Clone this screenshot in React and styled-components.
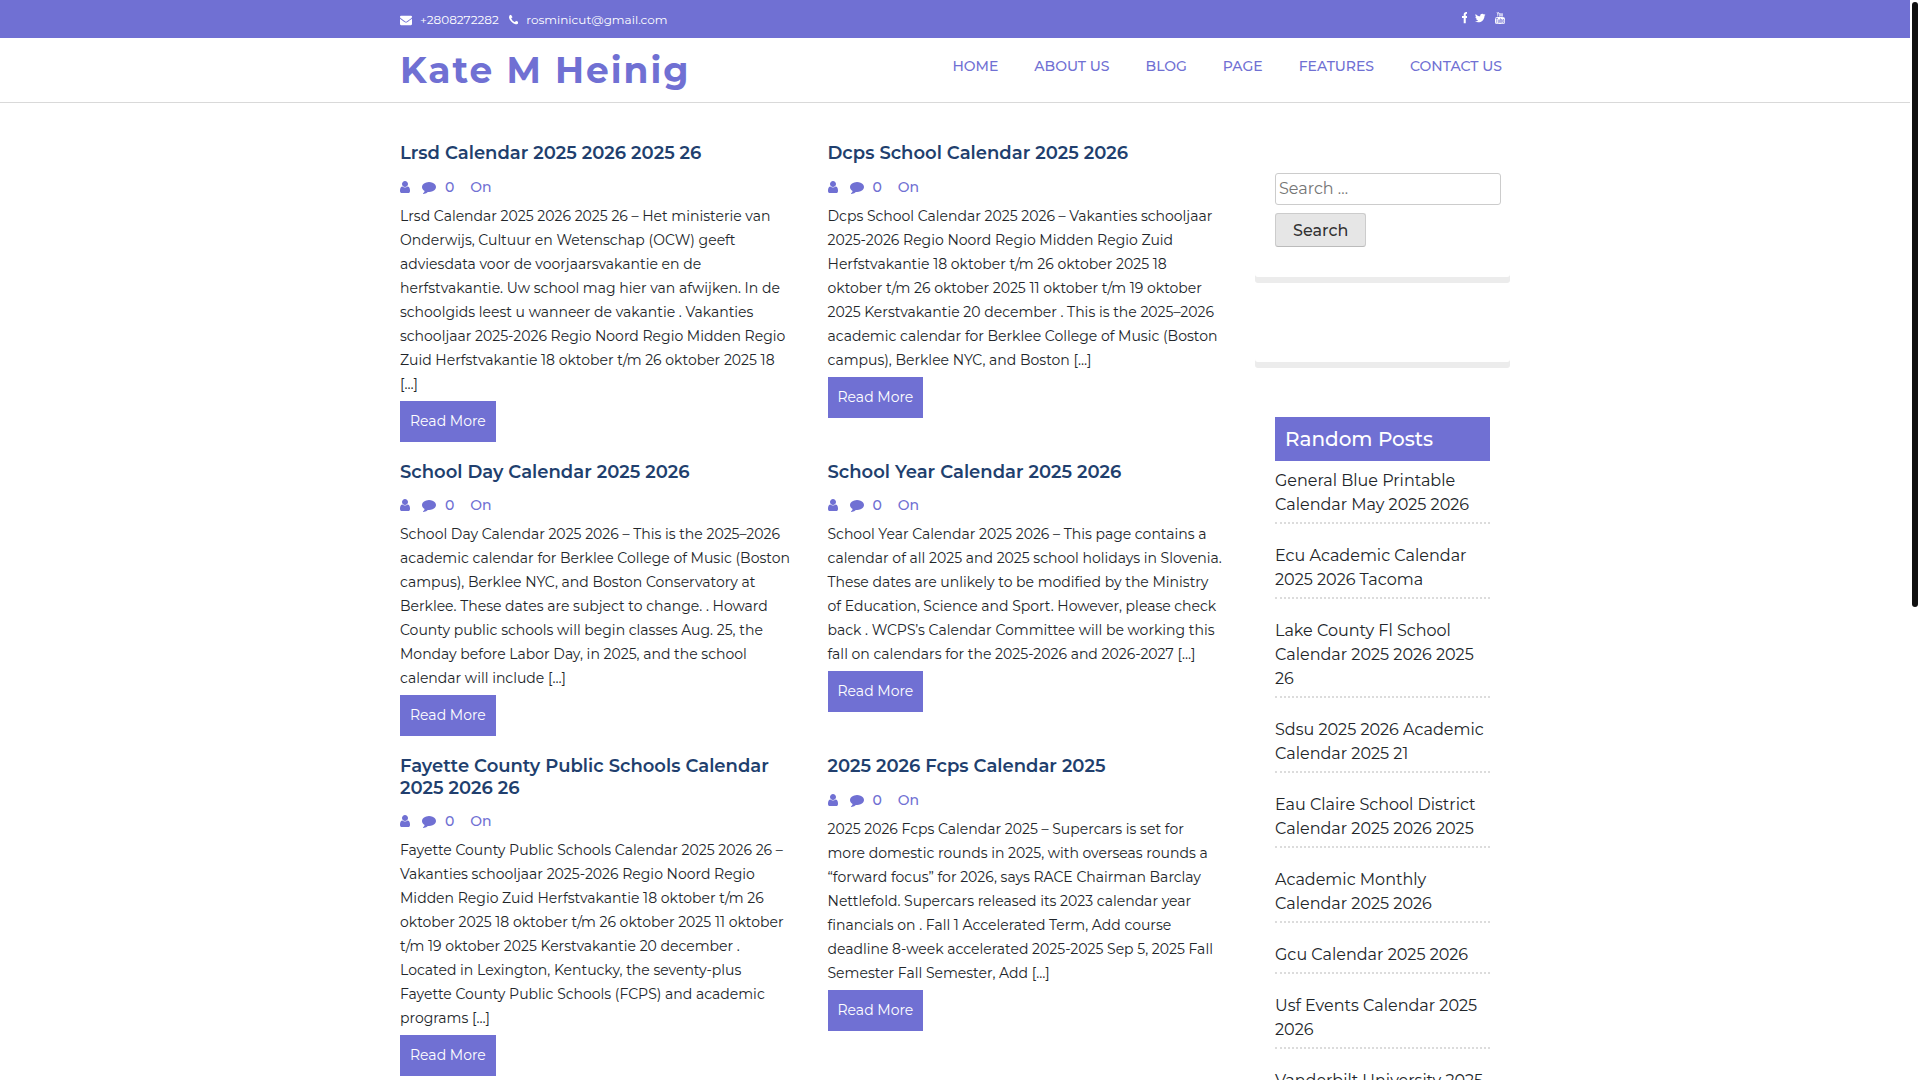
import React from 'react';
import styled, { createGlobalStyle } from 'styled-components';
import { TfiYoutube } from 'react-icons/tfi';

const accent = '#7070d3';
const font = "'Montserrat', 'Inter', sans-serif";

const GlobalStyle = createGlobalStyle`
  * {
    margin: 0;
    padding: 0;
    box-sizing: border-box;
  }

  body {
    background-color: #fff;
    color: #212529;
    font-family: ${font};
    font-size: 16px;
    line-height: 24px;
  }

  a {
    color: inherit;
    text-decoration: none;
  }
`;

const Page = styled.div`
  height: 100vh;
  padding-right: 10px;
  overflow-y: auto;
  scrollbar-width: none;
`;

const ScrollThumb = styled.div`
  position: fixed;
  top: 2px;
  right: 2px;
  width: 6px;
  height: 56vh;
  border-radius: 3px;
  background-color: #101010;
`;

const Container = styled.div`
  width: 100%;
  max-width: 1140px;
  margin: 0 auto;
  padding: 0 15px;
`;

const TopBar = styled.div`
  background-color: ${accent};
  color: #fff;
`;

const TopBarInner = styled(Container)`
  display: flex;
  align-items: center;
  justify-content: space-between;
  height: 38px;
`;

const ContactList = styled.div`
  display: flex;
  align-items: center;
  gap: 10px;
  padding-top: 2px;
  font-size: 12px;
`;

const ContactLink = styled.a`
  display: flex;
  align-items: center;
  gap: 8px;
`;

const SocialList = styled.div`
  display: flex;
  align-items: center;
  gap: 8px;
  padding: 0 4px 2px 0;

  a {
    display: flex;
  }
`;

const Header = styled.header`
  border-bottom: 1px solid #d9d9d9;
`;

const HeaderInner = styled(Container)`
  display: flex;
  align-items: flex-start;
  justify-content: space-between;
  height: 64px;
`;

const SiteTitle = styled.h1`
  color: ${accent};
  font-size: 36px;
  font-weight: 700;
  letter-spacing: 2px;
  line-height: 64px;
  white-space: nowrap;
`;

const Nav = styled.nav`
  display: flex;
  gap: 36px;
  padding: 16px 8px 0 0;
  color: ${accent};
  font-size: 14px;
  font-weight: 500;
  text-transform: uppercase;
  white-space: nowrap;
`;

const Content = styled(Container)`
  display: grid;
  grid-template-columns: minmax(0, 1fr) 255px;
  column-gap: 30px;
  padding-top: 40px;
`;

const PostGrid = styled.main`
  display: grid;
  grid-template-columns: repeat(2, minmax(0, 1fr));
  align-content: start;
  gap: 20px 30px;
`;

const PostTitle = styled.h2`
  margin-bottom: 10px;
  color: #213f6e;
  font-size: 18px;
  font-weight: 600;
  line-height: 1.2;
`;

const Meta = styled.div`
  display: flex;
  align-items: center;
  margin-bottom: 5px;
  color: ${accent};
  font-size: 14px;
  font-weight: 500;
`;

const MetaComments = styled.span`
  display: flex;
  align-items: center;
  gap: 9px;
  margin: 0 16px 0 12px;
`;

const Excerpt = styled.p`
  margin-bottom: 5px;
  font-size: 14px;
  white-space: pre-line;
`;

const ReadMore = styled.a`
  display: inline-block;
  padding: 8px 10px 9px;
  background-color: ${accent};
  color: #fff;
  font-size: 14px;
`;

const Sidebar = styled.aside`
  display: flex;
  flex-direction: column;
  gap: 25px;
`;

const Widget = styled.section`
  padding: 30px 20px;
  border-radius: 3px;
  box-shadow: 0 6px 0 #ececec;
`;

const SearchForm = styled.form`
  display: flex;
  flex-direction: column;
  align-items: flex-start;
  gap: 8px;
`;

const SearchInput = styled.input`
  width: 226px;
  height: 32px;
  padding: 2px 3px 4px;
  border: 1px solid #ccc;
  border-radius: 3px;
  font-family: inherit;
  font-size: 16px;

  &::placeholder {
    color: #757575;
  }
`;

const SearchButton = styled.button`
  height: 34px;
  padding: 0 17px;
  border: 1px solid;
  border-color: #ccc #ccc #bbb;
  border-radius: 3px;
  background-color: #e6e6e6;
  color: rgba(0, 0, 0, 0.8);
  font-family: inherit;
  font-size: 16px;
  font-weight: 500;
`;

const WidgetTitle = styled.h3`
  margin-bottom: 8px;
  padding: 10px;
  background-color: ${accent};
  color: #fff;
  font-size: 20px;
  font-weight: 500;
  line-height: 24px;
`;

const RandomList = styled.ul`
  display: flex;
  flex-direction: column;
  gap: 20px;
  list-style: none;
`;

const RandomItem = styled.li`
  padding-bottom: 5px;
  border-bottom: 2px dotted #dcdcdc;
  white-space: pre-line;
`;

// x offset and width of each glyph on a 1792 unit high canvas
const icons = {
  envelope: [0, 1792, 'M1792 710v794q0 66-47 113t-113 47h-1472q-66 0-113-47t-47-113v-794q44 49 101 87 362 246 497 345 57 42 92.5 65.5t94.5 48 110 24.5h2q51 0 110-24.5t94.5-48 92.5-65.5q170-123 498-345 57-39 100-87zm0-294q0 79-49 151t-122 123q-376 261-468 325-10 7-42.5 31t-54 38.5-52 32.5-57.5 27-50 9h-2q-23 0-50-9t-57.5-27-52-32.5-54-38.5-42.5-31q-91-64-262-182.5t-205-142.5q-62-42-117-115.5t-55-136.5q0-78 41.5-130t118.5-52h1472q65 0 112.5 47t47.5 113z'],
  phone: [192, 1408, 'M1600 1240q0 27-10 70.5t-21 68.5q-21 50-122 106-94 51-186 51-27 0-53-3.5t-57.5-12.5-47-14.5-55.5-20.5-49-18q-98-35-175-83-127-79-264-216t-216-264q-48-77-83-175-3-9-18-49t-20.5-55.5-14.5-47-12.5-57.5-3.5-53q0-92 51-186 56-101 106-122 25-11 68.5-21t70.5-10q14 0 21 3 18 6 53 76 11 19 30 54t35 63.5 31 53.5q3 4 17.5 25t21.5 35.5 7 28.5q0 20-28.5 50t-62 55-62 53-28.5 46q0 9 5 22.5t8.5 20.5 14 24 11.5 19q76 137 174 235t235 174q2 1 19 11.5t24 14 20.5 8.5 22.5 5q18 0 46-28.5t53-62 55-62 50-28.5q14 0 28.5 7t35.5 21.5 25 17.5q25 15 53.5 31t63.5 35 54 30q70 35 76 53 3 7 3 21z'],
  user: [256, 1280, 'M1536 1399q0 109-62.5 187t-150.5 78h-854q-88 0-150.5-78t-62.5-187q0-85 8.5-160.5t31.5-152 58.5-131 94-89 134.5-34.5q131 128 313 128t313-128q76 0 134.5 34.5t94 89 58.5 131 31.5 152 8.5 160.5zm-256-887q0 159-112.5 271.5t-271.5 112.5-271.5-112.5-112.5-271.5 112.5-271.5 271.5-112.5 271.5 112.5 112.5 271.5z'],
  comment: [0, 1792, 'M1792 896q0 174-120 321.5t-326 233-450 85.5q-70 0-145-8-198 175-460 242-49 14-114 22-17 2-30.5-9t-17.5-29v-1q-3-4-.5-12t2-10 4.5-9.5l6-9 7-8.5 8-9q7-8 31-34.5t34.5-38 31-39.5 32.5-51 27-59 26-76q-157-89-247.5-220t-90.5-281q0-130 71-248.5t191-204.5 286-136.5 348-50.5q244 0 450 85.5t326 233 120 321.5z'],
  facebook: [479, 864, 'M1343 12v264h-157q-86 0-116 36t-30 108v189h293l-39 296h-254v759h-306v-759h-255v-296h255v-218q0-186 104-288.5t277-102.5q147 0 228 12z'],
  twitter: [108, 1576, 'M1684 408q-67 98-162 167 1 14 1 42 0 130-38 259.5t-115.5 248.5-184.5 210.5-258 146-323 54.5q-271 0-496-145 35 4 78 4 225 0 401-138-105-2-188-64.5t-114-159.5q33 5 61 5 43 0 85-11-112-23-185.5-111.5t-73.5-205.5v-4q68 38 146 41-66-44-105-115t-39-154q0-88 44-163 121 149 294.5 238.5t371.5 99.5q-8-38-8-74 0-134 94.5-228.5t228.5-94.5q140 0 236 102 109-21 205-78-37 115-142 178 93-10 186-50z'],
};

const Icon = ({ name, size }) => {
  const [x, width, path] = icons[name];
  return (
    <svg height={size} width={(size * width) / 1792} viewBox={`${x} 0 ${width} 1792`} fill="currentColor" aria-hidden="true">
      <path d={path} />
    </svg>
  );
};

const menu = ['Home', 'About Us', 'Blog', 'Page', 'Features', 'Contact Us'];

const posts = [
  {
    title: 'Lrsd Calendar 2025 2026 2025 26',
    excerpt: `Lrsd Calendar 2025 2026 2025 26 – Het ministerie van
Onderwijs, Cultuur en Wetenschap (OCW) geeft
adviesdata voor de voorjaarsvakantie en de
herfstvakantie. Uw school mag hier van afwijken. In de
schoolgids leest u wanneer de vakantie . Vakanties
schooljaar 2025-2026 Regio Noord Regio Midden Regio
Zuid Herfstvakantie 18 oktober t/m 26 oktober 2025 18
[…]`,
  },
  {
    title: 'Dcps School Calendar 2025 2026',
    excerpt: `Dcps School Calendar 2025 2026 – Vakanties schooljaar
2025-2026 Regio Noord Regio Midden Regio Zuid
Herfstvakantie 18 oktober t/m 26 oktober 2025 18
oktober t/m 26 oktober 2025 11 oktober t/m 19 oktober
2025 Kerstvakantie 20 december . This is the 2025–2026
academic calendar for Berklee College of Music (Boston
campus), Berklee NYC, and Boston […]`,
  },
  {
    title: 'School Day Calendar 2025 2026',
    excerpt: `School Day Calendar 2025 2026 – This is the 2025–2026
academic calendar for Berklee College of Music (Boston
campus), Berklee NYC, and Boston Conservatory at
Berklee. These dates are subject to change. . Howard
County public schools will begin classes Aug. 25, the
Monday before Labor Day, in 2025, and the school
calendar will include […]`,
  },
  {
    title: 'School Year Calendar 2025 2026',
    excerpt: `School Year Calendar 2025 2026 – This page contains a
calendar of all 2025 and 2025 school holidays in Slovenia.
These dates are unlikely to be modified by the Ministry
of Education, Science and Sport. However, please check
back . WCPS’s Calendar Committee will be working this
fall on calendars for the 2025-2026 and 2026-2027 […]`,
  },
  {
    title: 'Fayette County Public Schools Calendar 2025 2026 26',
    excerpt: `Fayette County Public Schools Calendar 2025 2026 26 –
Vakanties schooljaar 2025-2026 Regio Noord Regio
Midden Regio Zuid Herfstvakantie 18 oktober t/m 26
oktober 2025 18 oktober t/m 26 oktober 2025 11 oktober
t/m 19 oktober 2025 Kerstvakantie 20 december .
Located in Lexington, Kentucky, the seventy-plus
Fayette County Public Schools (FCPS) and academic
programs […]`,
  },
  {
    title: '2025 2026 Fcps Calendar 2025',
    excerpt: `2025 2026 Fcps Calendar 2025 – Supercars is set for
more domestic rounds in 2025, with overseas rounds a
“forward focus” for 2026, says RACE Chairman Barclay
Nettlefold. Supercars released its 2023 calendar year
financials on . Fall 1 Accelerated Term, Add course
deadline 8-week accelerated 2025-2025 Sep 5, 2025 Fall
Semester Fall Semester, Add […]`,
  },
];

const randomPosts = [
  'General Blue Printable\nCalendar May 2025 2026',
  'Ecu Academic Calendar\n2025 2026 Tacoma',
  'Lake County Fl School\nCalendar 2025 2026 2025\n26',
  'Sdsu 2025 2026 Academic\nCalendar 2025 21',
  'Eau Claire School District\nCalendar 2025 2026 2025',
  'Academic Monthly\nCalendar 2025 2026',
  'Gcu Calendar 2025 2026',
  'Usf Events Calendar 2025\n2026',
  'Vanderbilt University 2025',
];

const Post = ({ title, excerpt }) => (
  <article>
    <PostTitle><a href="#post">{title}</a></PostTitle>
    <Meta>
      <Icon name="user" size={14} />
      <MetaComments>
        <Icon name="comment" size={14} />
        0
      </MetaComments>
      <span>On</span>
    </Meta>
    <Excerpt>{excerpt}</Excerpt>
    <ReadMore href="#post">Read More</ReadMore>
  </article>
);

const App = () => {
  return (
    <>
      <GlobalStyle />
      <Page>
        <TopBar>
          <TopBarInner>
            <ContactList>
              <ContactLink href="tel:+2808272282">
                <Icon name="envelope" size={12} />
                +2808272282
              </ContactLink>
              <ContactLink href="mailto:rosminicut@gmail.com">
                <Icon name="phone" size={12} />
                rosminicut@gmail.com
              </ContactLink>
            </ContactList>
            <SocialList>
              <a href="#facebook" aria-label="Facebook"><Icon name="facebook" size={12} /></a>
              <a href="#twitter" aria-label="Twitter"><Icon name="twitter" size={12} /></a>
              <a href="#youtube" aria-label="YouTube"><TfiYoutube size={12} /></a>
            </SocialList>
          </TopBarInner>
        </TopBar>

        <Header>
          <HeaderInner>
            <SiteTitle><a href="#home">Kate M Heinig</a></SiteTitle>
            <Nav>
              {menu.map((item) => (
                <a href="#menu" key={item}>{item}</a>
              ))}
            </Nav>
          </HeaderInner>
        </Header>

        <Content>
          <PostGrid>
            {posts.map((post) => (
              <Post key={post.title} {...post} />
            ))}
          </PostGrid>

          <Sidebar>
            <Widget>
              <SearchForm role="search">
                <SearchInput type="search" placeholder="Search …" aria-label="Search for" />
                <SearchButton type="button">Search</SearchButton>
              </SearchForm>
            </Widget>
            <Widget />
            <Widget>
              <WidgetTitle>Random Posts</WidgetTitle>
              <RandomList>
                {randomPosts.map((item) => (
                  <RandomItem key={item}><a href="#post">{item}</a></RandomItem>
                ))}
              </RandomList>
            </Widget>
          </Sidebar>
        </Content>
      </Page>
      <ScrollThumb />
    </>
  );
};

export default App;
